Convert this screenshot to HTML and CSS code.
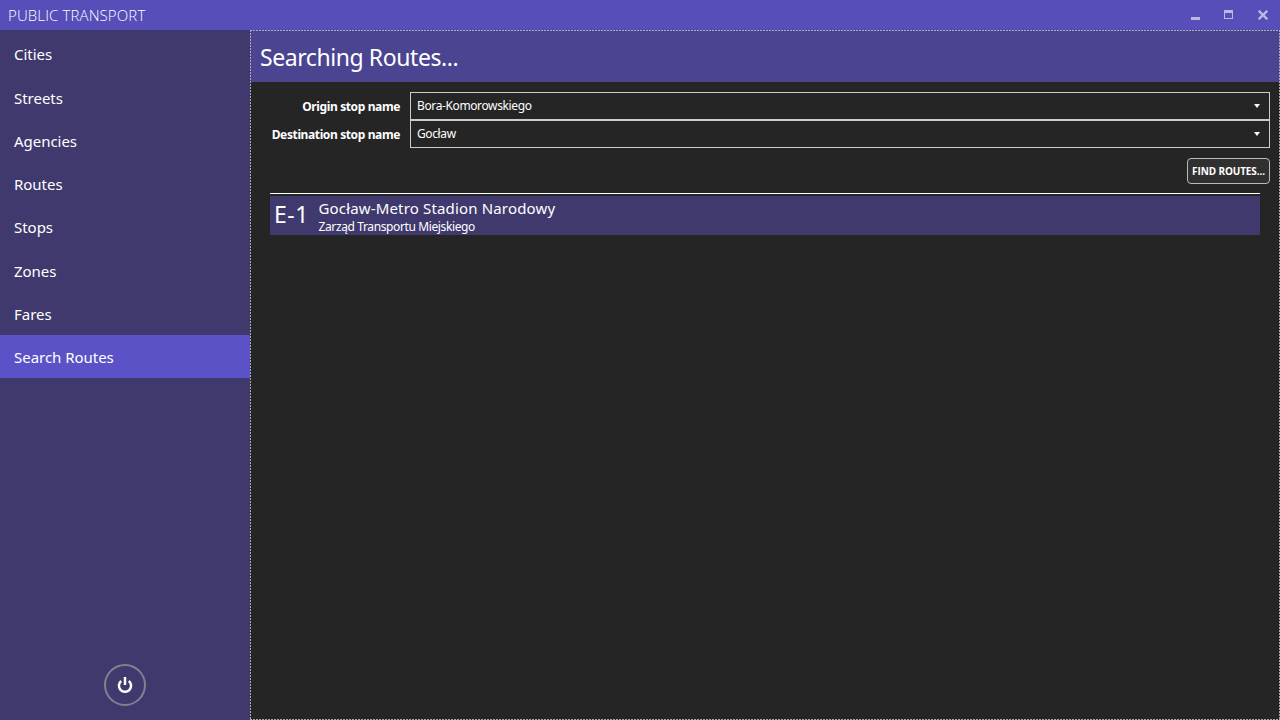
FILE: index.html
```
<!DOCTYPE html>
<html lang="en">
<head>
<meta charset="utf-8">
<title>Public Transport</title>
<link rel="stylesheet" href="styles.css">
</head>
<body>
<div class="window">
  <header class="titlebar">
    <span class="app-title">PUBLIC TRANSPORT</span>
    <div class="controls">
      <svg width="9" height="10" viewBox="0 0 9 10" shape-rendering="crispEdges"><path d="M0 7h9v3H0z"/></svg>
      <svg width="9" height="10" viewBox="0 0 9 10" shape-rendering="crispEdges"><path fill-rule="evenodd" d="M0 0h9v9H0zM1 3v5h7V3z"/></svg>
      <svg class="close" width="10" height="10" viewBox="0 0 10 10"><path d="M.7 .7l8.6 8.6M9.3 .7L.7 9.3"/></svg>
    </div>
  </header>
  <div class="body">
    <aside class="sidebar">
      <nav class="menu">
        <a class="item">Cities</a>
        <a class="item">Streets</a>
        <a class="item">Agencies</a>
        <a class="item">Routes</a>
        <a class="item">Stops</a>
        <a class="item">Zones</a>
        <a class="item">Fares</a>
        <a class="item selected">Search Routes</a>
      </nav>
      <button class="power" aria-label="Exit">
        <svg width="16" height="18" viewBox="0 0 16 18"><path d="M4.2 4.9a6.1 6.1 0 1 0 7.6 0M8 1v8"/></svg>
      </button>
    </aside>
    <main class="content">
      <svg class="focus" width="1030" height="690"><path d="M0 .5H1030M0 689.5H1030M.5 0V690M1029.5 0V690"/></svg>
      <h1 class="heading">Searching Routes...</h1>
      <div class="form">
        <label class="label">Origin stop name</label>
        <div class="combo"><span>Bora-Komorowskiego</span><i class="arrow"></i></div>
        <label class="label">Destination stop name</label>
        <div class="combo"><span>Gocław</span><i class="arrow"></i></div>
      </div>
      <button class="find">FIND ROUTES...</button>
      <section class="results">
        <article class="route">
          <span class="line">E-1</span>
          <div class="info">
            <span class="name">Gocław-Metro Stadion Narodowy</span>
            <span class="agency">Zarząd Transportu Miejskiego</span>
          </div>
        </article>
      </section>
    </main>
  </div>
</div>
</body>
</html>
```
FILE: styles.css
```
* { box-sizing: border-box; }
body { margin: 0; background: #252525; color: #fff; font-family: "Noto Sans", "Open Sans", sans-serif; }
.window { width: 1280px; height: 720px; display: flex; flex-direction: column; overflow: hidden; }
.titlebar { height: 30px; background: #574eb9; display: flex; justify-content: space-between; align-items: center; padding: 0 12px 0 8px; }
.app-title { font-family: "Open Sans", sans-serif; font-weight: 300; font-size: 15px; line-height: 20px; letter-spacing: 0.12px; white-space: nowrap; }
.controls { display: flex; gap: 24px; fill: #bcb8e3; }
.controls .close { margin-left: 1px; fill: none; stroke: #bcb8e3; stroke-width: 2.3; }
.body { flex: 1; display: flex; }
.sidebar { width: 250px; background: #3f396d; display: flex; flex-direction: column; justify-content: space-between; align-items: center; padding: 3px 0 14px; }
.menu { width: 250px; }
.item { display: flex; align-items: center; height: 43.2px; padding-left: 14px; font-size: 15px; line-height: 20px; letter-spacing: -0.03px; white-space: nowrap; }
.item:first-child { padding-bottom: 1px; }
.item.selected { height: 43px; background: #5c52c7; }
.power { width: 42px; height: 42px; border: 2px solid #83808f; border-radius: 50%; background: none; padding: 0; display: flex; align-items: center; justify-content: center; }
.power path { fill: none; stroke: #fff; stroke-width: 2.5; }
.content { width: 1030px; position: relative; display: flex; flex-direction: column; }
.focus { position: absolute; left: 0; top: 0; fill: none; stroke: #a9a8ad; stroke-dasharray: 2 1; }
.heading { margin: 0; height: 52px; background: #4b4491; padding: 0 10px; font-weight: 400; font-size: 23px; line-height: 55px; white-space: nowrap; letter-spacing: -0.42px; }
.form { display: grid; grid-template-columns: 140px 1fr; grid-auto-rows: 28px; column-gap: 10px; padding: 10px 10px 0 10px; }
.label { text-align: right; font-weight: 700; font-size: 12px; line-height: 29px; letter-spacing: -0.38px; white-space: nowrap; }
.combo { border: 1px solid #ccc; display: flex; justify-content: space-between; align-items: center; padding: 0 9px 0 6px; font-size: 12px; line-height: 24px; letter-spacing: -0.38px; }
.arrow { border: solid transparent; border-width: 4px 3px 0; border-top-color: #fff; }
.find { align-self: flex-end; margin: 10px 10px 0; width: 83px; height: 26px; border: 1px solid #bbb; border-radius: 4px; background: #303030; color: #fff; padding: 0; font: 700 10px/22px "Open Sans", sans-serif; letter-spacing: -0.12px; white-space: nowrap; }
.results { margin: 9px 20px 0; border-top: 1px solid #fff; padding-top: 2px; }
.route { height: 39px; background: #3f396d; display: flex; padding-left: 4px; }
.line { width: 44.5px; font-size: 23px; line-height: 37px; letter-spacing: 0.5px; }
.info { display: flex; flex-direction: column; white-space: nowrap; }
.name { font-size: 15px; line-height: 22px; padding-top: 1px; letter-spacing: 0.16px; }
.agency { font-size: 12px; line-height: 16px; letter-spacing: -0.38px; }
```
